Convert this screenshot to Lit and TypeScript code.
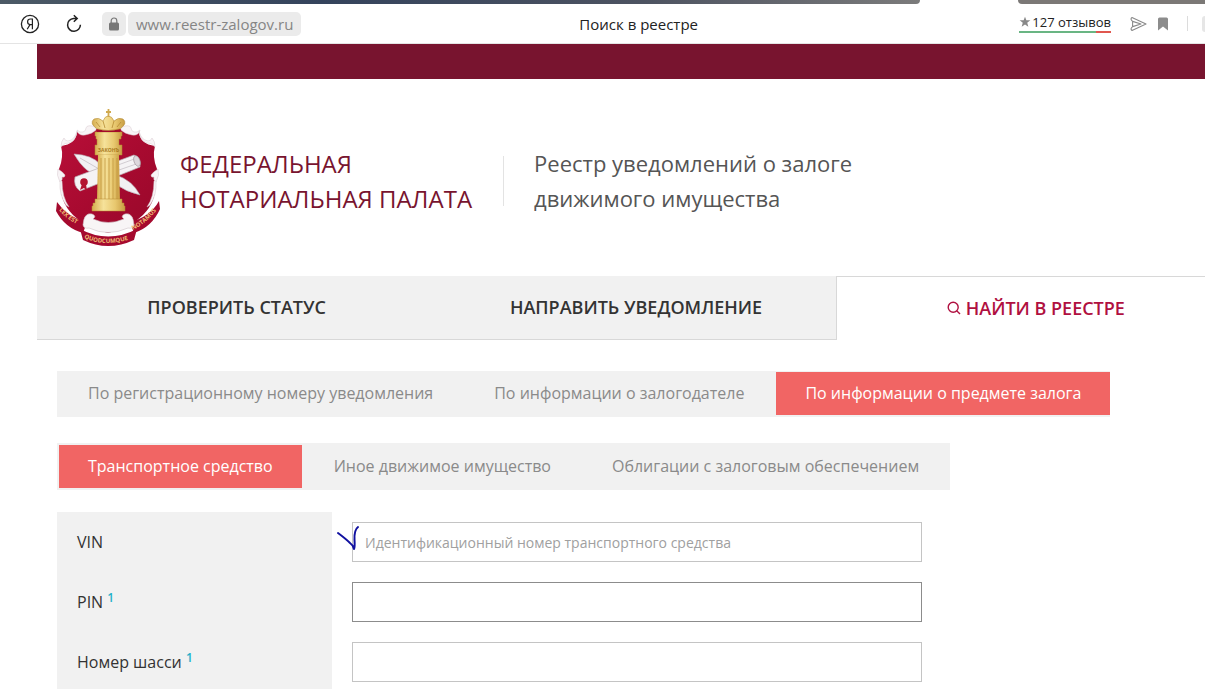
import { LitElement, html, css, svg, nothing } from "lit";
import { customElement, state } from "lit/decorators.js";

@customElement("registry-emblem")
export class RegistryEmblem extends LitElement {
  static styles = css`
    :host { display: block; margin-bottom: 6px; }
    svg { display: block; width: 104px; height: 138px; }
    .motto { font: 700 6px "Open Sans", sans-serif; fill: #f0bd72; }
    .word { font: 700 5px "Open Sans", sans-serif; fill: #a97a1f; }
  `;

  render() {
    const flutes = [45, 49, 53, 57, 61];
    return html`
      <svg viewBox="0 0 104 138" role="img" aria-label="Герб нотариальной палаты">
        <defs>
          <linearGradient id="red" x1="0" y1="0" x2="1" y2="1">
            <stop offset="0" stop-color="#b80f38" />
            <stop offset="0.5" stop-color="#a80a30" />
            <stop offset="1" stop-color="#98082a" />
          </linearGradient>
          <linearGradient id="gold" x1="0" x2="1" y1="0" y2="0">
            <stop offset="0" stop-color="#d6ad4e" />
            <stop offset="0.35" stop-color="#f6e29a" />
            <stop offset="0.7" stop-color="#e8c86f" />
            <stop offset="1" stop-color="#c89c42" />
          </linearGradient>
          <path id="arcLeft" d="M3 101 Q13 113 29 119" />
          <path id="arcMid" d="M28 129 Q53 140 82 127" />
          <path id="arcRight" d="M77 121 Q93 113 105 95" />
        </defs>
        <path d="M21 23 Q29 28 37 20 H68 Q76 28 83 23 Q84 35 99 37 Q96 48 101 60 Q104 66 99 72 Q101 92 87 106 Q74 119 52 124 Q30 119 17 106 Q3 92 5 72 Q0 66 3 60 Q8 48 5 37 Q20 35 21 23Z" fill="url(#red)" />
        <g fill="#f8f4f6" stroke="#d6c8ce" stroke-width="0.5">
          <path d="M40 18 Q31 15 30 19 Q30 22 27 23 Q24 24 21 21 Q22 27 29 26 Q36 25 40 21Z" />
          <path d="M65 18 Q74 15 75 19 Q75 22 78 23 Q81 24 84 21 Q83 27 76 26 Q69 25 65 21Z" />
          <path d="M21 22 Q19 31 12 32 Q9 32 8 29 Q5 32 5 38 Q9 33 13 34 Q20 32 21 22Z" />
          <path d="M83 22 Q85 31 92 32 Q95 32 96 29 Q99 32 99 38 Q95 33 91 34 Q84 32 83 22Z" />
          <path d="M2 60 Q0 66 4 73 Q7 71 6 68 Q9 69 9 66 Q7 63 2 60Z" />
          <path d="M102 60 Q104 66 100 73 Q97 71 98 68 Q95 69 95 66 Q97 63 102 60Z" />
          <path d="M4 72 Q3 86 10 96 L13 98 Q6 88 6 72Z" />
          <path d="M100 72 Q101 86 94 96 L91 98 Q98 88 98 72Z" />
        </g>
        <path d="M18 45 Q36 46 44 55 L44 66 Q30 66 18 45Z M60 66 Q76 71 84 86 Q70 83 58 74Z" fill="#f2f0f3" stroke="#b7afb6" stroke-width="0.6" />
        <path d="M24 49 L43 60" stroke="#b7afb6" stroke-width="0.6" />
        <path d="M19 68 L78 46 Q85 49 84 58 L24 82 Q17 77 19 68Z" fill="#f5f3f5" stroke="#b9b0b6" stroke-width="0.7" />
        <path d="M62 56 L81 49 M63 61 L83 54" stroke="#c8c1c8" stroke-width="0.8" />
        <ellipse cx="81" cy="52" rx="3" ry="5.5" transform="rotate(-20 81 52)" fill="#ddd8dd" stroke="#a59ba1" stroke-width="0.7" />
        <circle cx="28" cy="73" r="3.8" fill="#b3142f" />
        <path d="M26 75 L24 81 L28 79 L31 82 L30 75Z" fill="#b3142f" />
        <path d="M39 23 H66 V27 H65 V30 H63 V36 H66 V46 H39 V36 H41 V30 H40 V27 H39Z" fill="url(#gold)" stroke="#b58a32" stroke-width="0.5" />
        <path d="M42 46 H63 L64 92 H41Z" fill="url(#gold)" />
        ${flutes.map((x) => svg`<path d=${`M${x} 49 L${x} 90`} stroke="#c49a42" stroke-width="0.9" />`)}
        <path d="M39 90 H66 V94 H68 V97 H69 V102 H36 V97 H37 V94 H39Z" fill="url(#gold)" stroke="#b58a32" stroke-width="0.5" />
        <path d="M41 20 H64 V23 H41Z" fill="#a30a2a" />
        <text class="word" x="52.5" y="43" text-anchor="middle">ЗАКОНЪ</text>
        <path d="M41 20 Q33 14 38 10 Q43 8 47 12 Q49 7 52 7 Q56 7 58 12 Q62 8 67 10 Q72 14 64 20 Q52 23 41 20Z" fill="url(#gold)" stroke="#a97c24" stroke-width="0.5" />
        <path d="M47 12 L49 19 M58 12 L56 19 M40 13 L44 18 M65 13 L61 18" stroke="#b58a32" stroke-width="0.8" />
        <path d="M52.5 0 V8 M50 3 H55" stroke="#d0a94e" stroke-width="1.8" />
        <path d="M1 93 Q11 108 31 113 L27 124 Q9 119 0 102Z M103 92 Q94 108 74 113 L78 124 Q96 118 104 100Z" fill="#a50a2e" />
        <path d="M24 120 Q52 135 81 120 L78 131 Q52 143 27 131Z" fill="#a50a2e" />
        <path d="M27 116 Q28 103 36 105 Q41 107 37 110 Q52 117 68 110 Q64 107 69 105 Q77 103 78 116 Q77 120 72 119 Q52 128 33 119 Q28 120 27 116Z" fill="#f8f5f6" stroke="#d0c4ca" stroke-width="0.6" />
        <text class="motto"><textPath href="#arcLeft">LEX EST</textPath></text>
        <text class="motto"><textPath href="#arcMid">QUODCUMQUE</textPath></text>
        <text class="motto"><textPath href="#arcRight">NOTAMUS</textPath></text>
      </svg>
    `;
  }
}

@customElement("browser-bar")
export class BrowserBar extends LitElement {
  static styles = css`
    :host { display: block; background: #fff; border-bottom: 1px solid #e4e4e4; font-family: "Open Sans", sans-serif; }
    .strip { display: flex; justify-content: space-between; height: 4px; }
    .strip-left { width: 920px; background: linear-gradient(90deg, #4c5a66, #34435c 35%, #4d5361 70%, #7b7b7b); border-bottom-right-radius: 4px; }
    .strip-right { width: 187px; background: #7b7876; border-bottom-left-radius: 4px; }
    .bar { display: grid; grid-template-columns: 8fr auto 7fr; align-items: center; height: 39px; }
    .left { display: flex; align-items: center; padding-left: 20px; }
    .right { display: flex; align-items: center; justify-content: flex-end; }
    button { display: flex; padding: 0; border: 0; background: none; color: #222; }
    .reload { margin: 0 18px 0 24px; }
    .lock { width: 24px; height: 24px; align-items: center; justify-content: center; border-radius: 5px; background: #ebebeb; }
    .url { margin-left: 2px; padding: 0 8px; border-radius: 5px; background: #ebebeb; color: #858585; font-size: 15px; line-height: 24px; }
    .title { color: #222; font-size: 15px; line-height: 24px; }
    .reviews { display: flex; align-items: center; gap: 1px; margin-right: 18px; color: #222; font-size: 13px; line-height: 16px; padding-bottom: 1px; text-decoration: none; border-bottom: 2px solid; border-image: linear-gradient(90deg, #69b583 83%, #e0574f 83%) 1; }
    .mark { margin-left: 10px; }
    .rule { width: 1px; height: 15px; margin: 0 14px 0 18px; background: #dcdcdc; }
    .edge { width: 3px; height: 16px; border-radius: 8px 0 0 8px; background: #e6e6e6; }
  `;

  render() {
    return html`
      <div class="strip"><div class="strip-left"></div><div class="strip-right"></div></div>
      <div class="bar">
        <div class="left">
          <button aria-label="Яндекс">
            <svg width="20" height="20" viewBox="0 0 20 20" fill="none" stroke="#222" stroke-width="1.3">
              <circle cx="10" cy="10" r="8.6" />
              <path d="M12.4 15.2V5H10.4Q7.6 5 7.6 7.8Q7.6 10.4 10 10.6H12.4M10 10.6L7.2 15.2" stroke-width="1.2" />
            </svg>
          </button>
          <button class="reload" aria-label="Обновить">
            <svg width="20" height="20" viewBox="0 0 20 20" fill="none" stroke="#222" stroke-width="1.5">
              <path d="M12.7 4.5H9.6A6.4 6.4 0 1 0 16.4 10.8M9.8 1.2L13.2 4.5L9.8 7.8" />
            </svg>
          </button>
          <button class="lock" aria-label="Защищено">
            <svg width="12" height="14" viewBox="0 0 12 14">
              <path d="M3.2 6V3.8a2.8 2.8 0 0 1 5.6 0V6" fill="none" stroke="#777" stroke-width="1.2" />
              <rect x="1" y="5.6" width="10" height="8" rx="1.5" fill="#777" />
            </svg>
          </button>
          <span class="url">www.reestr-zalogov.ru</span>
        </div>
        <div class="title">Поиск в реестре</div>
        <div class="right">
          <a class="reviews" href="#reviews">
            <svg width="12" height="12" viewBox="0 0 14 14"><path d="M7 0.8l1.6 4.3h4.6L9.6 7.9l1.3 4.5L7 9.8 3.1 12.4l1.3-4.5L0.8 5.1h4.6z" fill="#888" /></svg>
            <span>127 отзывов</span>
          </a>
          <button aria-label="Отправить">
            <svg width="18" height="16" viewBox="0 0 18 16" fill="none" stroke="#8a8a8a" stroke-width="1.1" stroke-linejoin="round">
              <path d="M3.600 5.400Q0.800 3 3 1.500L17 8L3 14.500Q0.800 13 3.600 10.600L12 8Z M3.600 5.400V10.600" />
            </svg>
          </button>
          <button class="mark" aria-label="Закладка">
            <svg width="12" height="14" viewBox="0 0 12 14"><path d="M1 2a1.5 1.5 0 0 1 1.5-1.5h7A1.5 1.5 0 0 1 11 2v11.5L6 9.5L1 13.5z" fill="#8c8c8c" /></svg>
          </button>
          <div class="rule"></div>
          <div class="edge"></div>
        </div>
      </div>
    `;
  }
}

interface Field { id: string; label: string; note?: boolean; hint?: string; strong?: boolean; }

@customElement("app-root")
export class AppRoot extends LitElement {
  static styles = css`
    :host { display: block; height: 100vh; overflow: hidden; background: #fff; color: #333; font-family: "Open Sans", sans-serif; }
    .page { min-width: 1198px; margin-left: 37px; }
    .band { height: 35px; background: #78142f; }
    header { display: flex; align-items: center; height: 197px; padding: 6px 0 0 19px; box-sizing: border-box; }
    .brand { margin-left: 20px; padding-right: 31px; color: #78142f; font-size: 24px; line-height: 35px; }
    .divider { width: 1px; height: 50px; background: #e3e3e3; }
    .about { margin-left: 30px; color: #555; font-size: 22px; line-height: 35px; }
    button { border: 0; margin: 0; font-family: inherit; cursor: pointer; }
    .main-tabs { display: grid; grid-template-columns: repeat(3, 1fr); }
    .main-tab { display: flex; align-items: center; justify-content: center; gap: 5px; height: 64px; padding: 0 0 1px; border-bottom: 1px solid #d8d8d8; background: #f1f1f1; color: #333; font-size: 18px; font-weight: 600; }
    .main-tab.current { border-top: 1px solid #d8d8d8; border-left: 1px solid #d8d8d8; border-bottom: 0; background: #fff; color: #b01040; }
    main { padding: 31px 20px 0; }
    .sub { display: flex; gap: 3px; width: max-content; padding: 1px 0 2px 2px; margin-bottom: 26px; background: #f1f1f1; }
    .sub.second { padding: 2px; margin-bottom: 22px; }
    .sub button { padding: 0 29px; background: none; color: #8a8a8a; font-size: 16px; line-height: 43px; }
    .sub button.active { background: #f16564; color: #fff; }
    .row { display: grid; grid-template-columns: 275px 570px; column-gap: 20px; align-items: center; }
    .row label { padding-left: 20px; background: #f1f1f1; color: #333; font-size: 16px; line-height: 60px; height: 60px; }
    sup { color: #1fb0c9; font-size: 12px; font-weight: 600; line-height: 0; }
    .box { position: relative; }
    input { display: block; width: 100%; height: 40px; box-sizing: border-box; padding: 0 12px; border: 1px solid #c4c4c4; border-radius: 0; background: #fff; color: #333; font: 14px "Open Sans", sans-serif; outline: none; }
    input::placeholder { color: #a0a0a0; opacity: 1; }
    input.strong { border-color: #8c8c8c; }
    .tick { position: absolute; left: -16px; top: 3px; }
  `;

  @state() private kind = 2;
  @state() private subject = 0;

  private kinds = ["По регистрационному номеру уведомления", "По информации о залогодателе", "По информации о предмете залога"];
  private subjects = ["Транспортное средство", "Иное движимое имущество", "Облигации с залоговым обеспечением"];
  private fields: Field[] = [
    { id: "vin", label: "VIN", hint: "Идентификационный номер транспортного средства" },
    { id: "pin", label: "PIN", note: true, strong: true },
    { id: "chassis", label: "Номер шасси", note: true },
  ];

  render() {
    return html`
      <browser-bar></browser-bar>
      <div class="page">
        <div class="band"></div>
        <header>
          <registry-emblem></registry-emblem>
          <div class="brand">ФЕДЕРАЛЬНАЯ<br />НОТАРИАЛЬНАЯ ПАЛАТА</div>
          <div class="divider"></div>
          <div class="about">Реестр уведомлений о залоге<br />движимого имущества</div>
        </header>
        <nav class="main-tabs">
          <button class="main-tab">ПРОВЕРИТЬ СТАТУС</button>
          <button class="main-tab">НАПРАВИТЬ УВЕДОМЛЕНИЕ</button>
          <button class="main-tab current">
            <svg width="14" height="14" viewBox="0 0 14 14" fill="none" stroke="currentColor" stroke-width="1.4"><circle cx="6.2" cy="6.2" r="5" /><path d="M9.7 9.7L13 13" /></svg>
            НАЙТИ В РЕЕСТРЕ
          </button>
        </nav>
        <main>
          <div class="sub">
            ${this.kinds.map((t, i) => html`<button class=${i === this.kind ? "active" : ""} @click=${() => (this.kind = i)}>${t}</button>`)}
          </div>
          <div class="sub second">
            ${this.subjects.map((t, i) => html`<button class=${i === this.subject ? "active" : ""} @click=${() => (this.subject = i)}>${t}</button>`)}
          </div>
          <form>
            ${this.fields.map((f) => html`
              <div class="row">
                <label for=${f.id}>${f.label}${f.note ? html` <sup>1</sup>` : nothing}</label>
                <div class="box">
                  <input id=${f.id} class=${f.strong ? "strong" : ""} type="text" placeholder=${f.hint ?? ""} />
                  ${f.id === "vin" ? html`<svg class="tick" width="26" height="28" viewBox="0 0 26 28" fill="none" stroke="#1111a0" stroke-width="2" stroke-linecap="round" stroke-linejoin="round"><path d="M2 8Q10 14 14 18Q17 20 18 24Q19 22 18.500 15Q18 5 22 2" /></svg>` : nothing}
                </div>
              </div>`)}
          </form>
        </main>
      </div>
    `;
  }
}
